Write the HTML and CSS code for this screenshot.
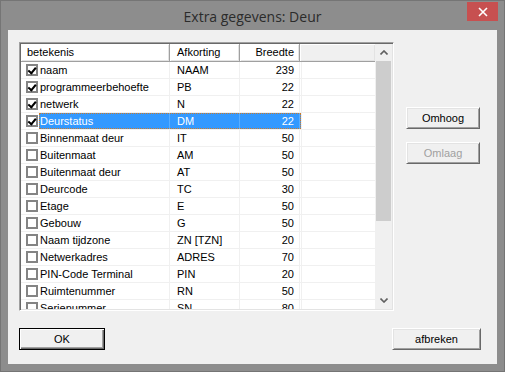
FILE: index.html
```html
<!DOCTYPE html>
<html lang="nl">
<head>
    <meta charset="UTF-8">
    <title>Extra gegevens: Deur</title>
    <link rel="stylesheet" href="styles.css">
</head>
<body>
    <div class="window">
        <div class="titlebar">
            <span class="title">Extra gegevens: Deur</span>
            <div class="close">
                <svg width="10" height="10" viewBox="0 0 10 10"><path d="M1 1 L9 9 M9 1 L1 9" stroke="#fff" stroke-width="1.6"/></svg>
            </div>
        </div>
        <div class="client">
            <div class="listview">
                <div class="lv-body">
                    <div class="lv-header">
                        <div class="hcell first">betekenis</div>
                        <div class="hcell">Afkorting</div>
                        <div class="hcell num">Breedte</div>
                        <div class="hcell filler"></div>
                    </div>
                    <!-- rijen -->
                    <div class="row"><div class="chk on"></div><div class="cols"><div class="c1">naam</div><div class="c2">NAAM</div><div class="c3">239</div></div><div class="rest"></div></div>
                    <div class="row"><div class="chk on"></div><div class="cols"><div class="c1">programmeerbehoefte</div><div class="c2">PB</div><div class="c3">22</div></div><div class="rest"></div></div>
                    <div class="row"><div class="chk on"></div><div class="cols"><div class="c1">netwerk</div><div class="c2">N</div><div class="c3">22</div></div><div class="rest"></div></div>
                    <div class="row selected"><div class="chk on"></div><div class="cols"><div class="c1">Deurstatus</div><div class="c2">DM</div><div class="c3">22</div></div><div class="rest"></div></div>
                    <div class="row"><div class="chk"></div><div class="cols"><div class="c1">Binnenmaat deur</div><div class="c2">IT</div><div class="c3">50</div></div><div class="rest"></div></div>
                    <div class="row"><div class="chk"></div><div class="cols"><div class="c1">Buitenmaat</div><div class="c2">AM</div><div class="c3">50</div></div><div class="rest"></div></div>
                    <div class="row"><div class="chk"></div><div class="cols"><div class="c1">Buitenmaat deur</div><div class="c2">AT</div><div class="c3">50</div></div><div class="rest"></div></div>
                    <div class="row"><div class="chk"></div><div class="cols"><div class="c1">Deurcode</div><div class="c2">TC</div><div class="c3">30</div></div><div class="rest"></div></div>
                    <div class="row"><div class="chk"></div><div class="cols"><div class="c1">Etage</div><div class="c2">E</div><div class="c3">50</div></div><div class="rest"></div></div>
                    <div class="row"><div class="chk"></div><div class="cols"><div class="c1">Gebouw</div><div class="c2">G</div><div class="c3">50</div></div><div class="rest"></div></div>
                    <div class="row"><div class="chk"></div><div class="cols"><div class="c1">Naam tijdzone</div><div class="c2">ZN [TZN]</div><div class="c3">20</div></div><div class="rest"></div></div>
                    <div class="row"><div class="chk"></div><div class="cols"><div class="c1">Netwerkadres</div><div class="c2">ADRES</div><div class="c3">70</div></div><div class="rest"></div></div>
                    <div class="row"><div class="chk"></div><div class="cols"><div class="c1">PIN-Code Terminal</div><div class="c2">PIN</div><div class="c3">20</div></div><div class="rest"></div></div>
                    <div class="row"><div class="chk"></div><div class="cols"><div class="c1">Ruimtenummer</div><div class="c2">RN</div><div class="c3">50</div></div><div class="rest"></div></div>
                    <div class="row"><div class="chk"></div><div class="cols"><div class="c1">Serienummer</div><div class="c2">SN</div><div class="c3">80</div></div><div class="rest"></div></div>
                </div>
                <div class="scrollbar">
                    <div class="arrow">
                        <svg width="8" height="5" viewBox="0 0 8 5"><path d="M0.5 4.5 L4 1 L7.5 4.5" fill="none" stroke="#606060" stroke-width="1.6"/></svg>
                    </div>
                    <div class="track"><div class="thumb"></div></div>
                    <div class="arrow">
                        <svg width="8" height="5" viewBox="0 0 8 5"><path d="M0.5 0.5 L4 4 L7.5 0.5" fill="none" stroke="#606060" stroke-width="1.6"/></svg>
                    </div>
                </div>
            </div>
            <div class="side">
                <button class="btn">Omhoog</button>
                <button class="btn" disabled>Omlaag</button>
            </div>
            <div class="bottom">
                <button class="btn default ok">OK</button>
                <button class="btn cancel">afbreken</button>
            </div>
        </div>
    </div>
</body>
</html>
```

FILE: styles.css
```css
html, body {
    margin: 0;
    padding: 0;
}
body {
    width: 505px;
    height: 372px;
    overflow: hidden;
    font-family: "Liberation Sans", Arial, sans-serif;
    font-size: 11px;
    color: #000;
}
.window {
    width: 505px;
    height: 372px;
    box-sizing: border-box;
    background: #8d8d8d;
    border: 1px solid #757575;
    display: flex;
    flex-direction: column;
}
.titlebar {
    height: 29px;
    display: flex;
    align-items: center;
    justify-content: center;
    position: relative;
}
.title {
    font-family: "Open Sans", "Noto Sans", sans-serif;
    font-size: 14px;
    color: #2b2b2b;
    margin-top: 1px;
}
.close {
    position: absolute;
    top: 1px;
    right: 6px;
    width: 31px;
    height: 19px;
    background: #c75050;
    display: flex;
    align-items: center;
    justify-content: center;
}
.client {
    flex: 1;
    margin: 0 7px 7px 7px;
    background: #f0f0f0;
    display: grid;
    grid-template-columns: 375px 1fr;
    grid-template-rows: 269px 1fr;
    padding: 12px 0 0 11px;
}

/* lijst */
.listview {
    display: flex;
    box-sizing: border-box;
    border: 1px solid;
    border-color: #a0a0a0 #fff #fff #a0a0a0;
    box-shadow: inset 1px 1px #696969, inset -1px -1px #e3e3e3;
    padding: 1px;
    background: #fff;
}
.lv-body {
    flex: 1;
    overflow: hidden;
}
.lv-header {
    display: grid;
    grid-template-columns: 149px 70px 60px 1fr;
    height: 18px;
}
.hcell {
    box-sizing: border-box;
    line-height: 17px;
    padding: 0 6px 0 7px;
    background: #fff;
    border-right: 1px solid #a0a0a0;
    border-bottom: 1px solid #a0a0a0;
    box-shadow: inset 1px 1px #fff, inset -1px -1px #e3e3e3;
}
.hcell.first {
    padding-left: 6px;
}
.hcell.num {
    text-align: right;
    padding-right: 5px;
}
.hcell.filler {
    border-right: none;
    background: #f0f0f0;
}
.row {
    display: grid;
    grid-template-columns: 18px 262px 1fr;
    height: 17px;
    box-sizing: border-box;
    border-bottom: 1px solid #f0f0f0;
}
.cols {
    display: grid;
    grid-template-columns: 131px 70px 60px;
    line-height: 16px;
}
.cols > div {
    box-sizing: border-box;
    border-right: 1px solid #f0f0f0;
    white-space: nowrap;
    overflow: hidden;
}
.c1 {
    padding-left: 1px;
}
.c2 {
    padding-left: 7px;
}
.c3 {
    text-align: right;
    padding-right: 5px;
}
.row.selected .cols {
    background: #3399ff;
    color: #fff;
    outline: 1px dotted #cc7a29;
    outline-offset: -1px;
}
.row.selected .cols > div {
    border-right-color: #5aaeff;
}
.rest {
    border-left: 1px solid #f0f0f0;
}

/* vinkjes */
.chk {
    width: 12px;
    height: 12px;
    box-sizing: border-box;
    border: 2px solid #848484;
    background: #fff;
    margin: 2px 0 0 5px;
    position: relative;
}
.chk.on::after {
    content: "";
    position: absolute;
    left: 1px;
    top: 0px;
    width: 3px;
    height: 6px;
    border: solid #000;
    border-width: 0 2px 2px 0;
    transform: rotate(40deg);
    transform-origin: 60% 60%;
}

/* schuifbalk */
.scrollbar {
    width: 17px;
    display: flex;
    flex-direction: column;
    background: #f0f0f0;
}
.arrow {
    height: 17px;
    display: flex;
    align-items: center;
    justify-content: center;
}
.track {
    flex: 1;
    padding: 0 1px;
}
.thumb {
    height: 160px;
    background: #cdcdcd;
}

/* knoppen */
.side {
    display: flex;
    flex-direction: column;
    align-items: flex-start;
    padding: 65px 0 0 12px;
    gap: 13px;
}
.btn {
    font-family: "Liberation Sans", Arial, sans-serif;
    font-size: 11px;
    color: #000;
    width: 74px;
    height: 22px;
    padding: 0;
    background: #f0f0f0;
    border: 1px solid;
    border-color: #fff #696969 #696969 #fff;
    box-shadow: inset 1px 1px #e3e3e3, inset -1px -1px #a0a0a0;
    border-radius: 0;
}
.btn:disabled {
    color: #a0a0a0;
}
.btn.default {
    border-color: #000;
    box-shadow: inset 1px 1px #fff, inset -1px -1px #696969, inset -2px -2px #a0a0a0;
}
.bottom {
    grid-column: 1 / 3;
    display: flex;
    justify-content: space-between;
    align-items: flex-start;
    padding: 17px 16px 0 0;
}
.ok {
    width: 86px;
}
.cancel {
    width: 89px;
}
```
